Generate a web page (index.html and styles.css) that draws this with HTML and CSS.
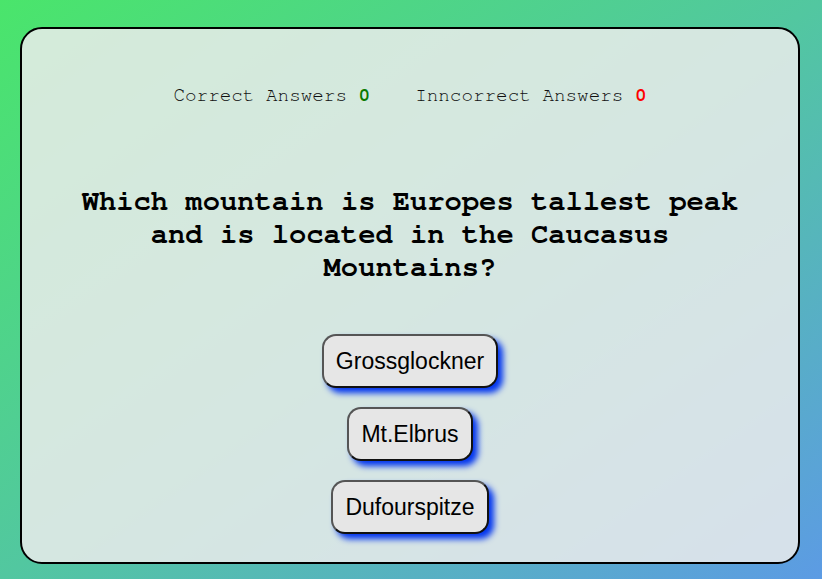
FILE: index.html
```html
<!DOCTYPE html>
<html lang="en">
<head>
<meta charset="utf-8">
<title>Quiz</title>
<link rel="stylesheet" href="styles.css">
</head>
<body>
<main class="card">
  <div class="score">
    <span class="score-item">Correct Answers <b class="num num-good">0</b></span>
    <span class="score-item">Inncorrect Answers <b class="num num-bad">0</b></span>
  </div>
  <h2 class="question">Which mountain is Europes tallest peak and is located in the Caucasus Mountains?</h2>
  <div class="answers">
    <button class="answer">Grossglockner</button>
    <button class="answer">Mt.Elbrus</button>
    <button class="answer">Dufourspitze</button>
  </div>
</main>
</body>
</html>
```
FILE: styles.css
```css
* { box-sizing: border-box; }
html, body { height: 100%; }
body {
  margin: 0;
  background: linear-gradient(to bottom right, #4ae56b 0%, #52c7a0 50%, #5c9be4 100%);
  font-family: "Nimbus Mono PS", "Nimbus Mono L", "FreeMono", "Courier New", Courier, "Liberation Mono", monospace;
  overflow: hidden;
}
.card {
  width: 780px;
  height: 537px;
  margin: 27px 0 0 20px;
  border: 2px solid #000;
  border-radius: 22px;
  background: rgba(236, 236, 236, 0.85);
  display: flex;
  flex-direction: column;
  align-items: center;
  padding-top: 57px;
}
.score {
  display: flex;
  justify-content: center;
  gap: 45px;
  font-size: 19.3px;
  color: #111;
}
.num { font-weight: bold; }
.num-good { color: #0a7a00; }
.num-bad { color: #ff0000; }
.question {
  margin: 80px 0 0;
  max-width: 680px;
  text-align: center;
  font-size: 28.8px;
  font-weight: bold;
  line-height: 33px;
  color: #000;
}
.answers {
  margin-top: 50px;
  display: flex;
  flex-direction: column;
  align-items: center;
  gap: 19px;
}
.answer {
  font-family: "Liberation Sans", Arial, sans-serif;
  font-size: 23px;
  line-height: 26px;
  color: #000;
  background: #e6e6e6;
  padding: 12px 12px;
  border: 2px solid;
  border-color: #555 #111 #111 #555;
  border-radius: 14px;
  box-shadow: 5px 5px 6px #0034ee;
  cursor: pointer;
}
```
